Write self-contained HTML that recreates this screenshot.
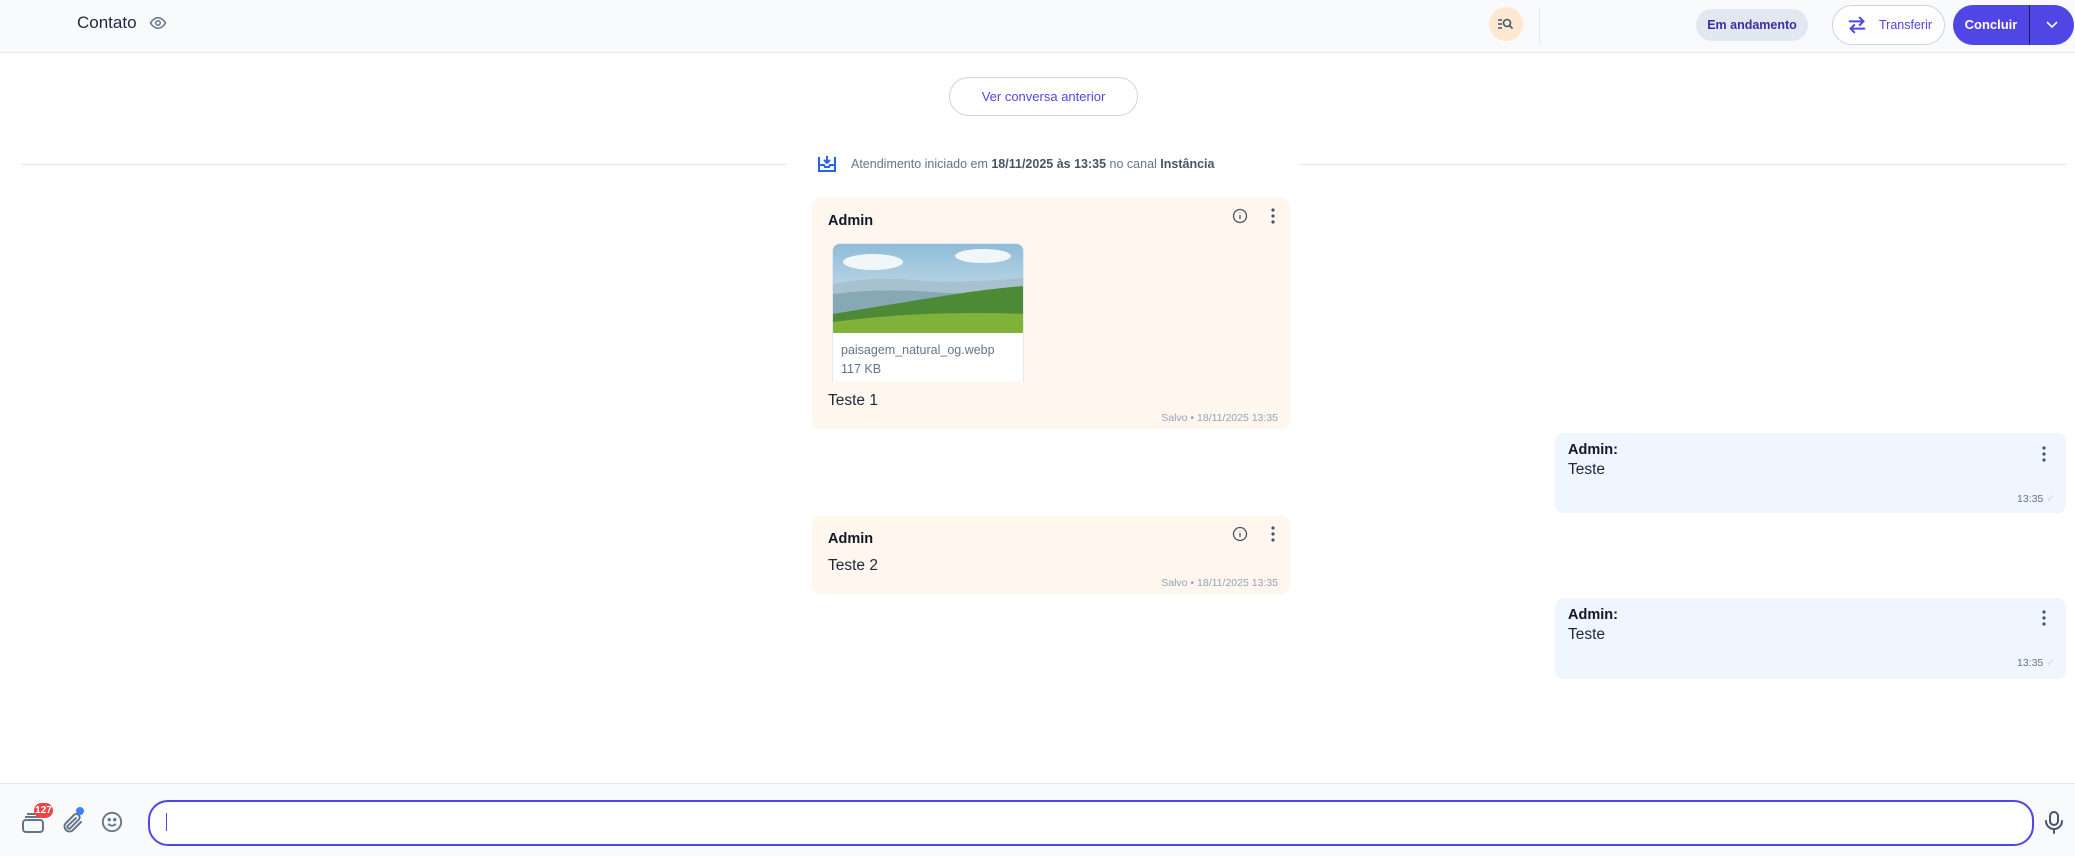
<!DOCTYPE html>
<html><head><meta charset="utf-8"><style>
*{box-sizing:border-box;margin:0;padding:0}
body{width:2075px;height:856px;position:relative;background:#fff;font-family:"Liberation Sans",sans-serif;overflow:hidden;color:#1e293b}
.a{position:absolute}
.hdr{left:0;top:0;width:2075px;height:53px;background:#f8fafc;border-bottom:1px solid #e2e8f0}
.bub{position:absolute;border-radius:8px}
.or{background:#fff6ee}
.bl{background:#eff6ff}
.nm{font-weight:bold;font-size:14.5px;color:#0f172a}
.tx{font-size:15.5px;color:#1e293b}
.ft{font-size:10.5px;color:#94a3b8}
</style></head><body>
<div class="a hdr"></div>
<div class="a" style="left:77px;top:13px;font-size:17px;color:#1e293b">Contato</div>
<svg class="a" style="left:148px;top:14px" width="20" height="18" viewBox="0 0 24 24" fill="none" stroke="#64748b" stroke-width="2"><path d="M2 12s4-7 10-7 10 7 10 7-4 7-10 7S2 12 2 12z"/><circle cx="12" cy="12" r="3"/></svg>
<div class="a" style="left:1489px;top:7px;width:34px;height:34px;border-radius:50%;background:#fde9d2"></div>
<svg class="a" style="left:1497px;top:16px" width="18" height="16" viewBox="0 0 18 16" fill="none" stroke="#475569" stroke-width="1.6"><path d="M1 4h4M1 8h4M1 12h4"/><circle cx="10" cy="7" r="3.5"/><path d="M12.5 9.5l3 3"/></svg>
<div class="a" style="left:1539px;top:8px;width:1px;height:36px;background:#e2e8f0"></div>
<div class="a" style="left:1696px;top:9px;width:112px;height:32px;border-radius:16px;background:#e2e8f0;color:#3730a3;font-size:12.5px;font-weight:bold;text-align:center;line-height:32px">Em andamento</div>
<div class="a" style="left:1832px;top:5px;width:113px;height:40px;border-radius:20px;background:#fff;border:1px solid #cbd5e1;color:#4f46e5;font-size:12.5px;line-height:38px;padding-left:46px">Transferir</div>
<svg class="a" style="left:1846px;top:14px" width="22" height="22" viewBox="0 0 24 24" fill="none" stroke="#4f46e5" stroke-width="2.2" stroke-linecap="round"><path d="M4 8h15M15 4l4 4-4 4M20 16H5M9 12l-4 4 4 4"/></svg>
<div class="a" style="left:1953px;top:5px;width:121px;height:40px;border-radius:20px;background:#4f46e5"></div>
<div class="a" style="left:1953px;top:5px;width:76px;height:40px;color:#fff;font-size:13px;font-weight:bold;text-align:center;line-height:40px">Concluir</div>
<div class="a" style="left:2029px;top:5px;width:1px;height:40px;background:#1e1b4b"></div>
<svg class="a" style="left:2045px;top:19px" width="14" height="12" viewBox="0 0 14 12" fill="none" stroke="#fff" stroke-width="1.6"><path d="M2 3l5 5 5-5"/></svg>

<div class="a" style="left:949px;top:77px;width:189px;height:39px;border-radius:20px;border:1px solid #cbd5e1;color:#4f46e5;font-size:13px;text-align:center;line-height:37px">Ver conversa anterior</div>
<div class="a" style="left:21px;top:164px;width:766px;height:1px;background:#e2e8f0"></div>
<div class="a" style="left:1300px;top:164px;width:767px;height:1px;background:#e2e8f0"></div>
<svg class="a" style="left:817px;top:154px" width="20" height="20" viewBox="0 0 20 20" fill="none" stroke="#2563eb" stroke-width="2"><path d="M2 3v14h16V3"/><path d="M2 11h5l1 2h4l1-2h5M10 2v7M7 6l3 3 3-3"/></svg>
<div class="a" style="left:851px;top:157px;font-size:12.5px;color:#64748b">Atendimento iniciado em <b style="color:#475569">18/11/2025 às 13:35</b> no canal <b style="color:#475569">Instância</b></div>

<div class="bub or" style="left:812px;top:198px;width:478px;height:231px"></div>
<div class="a nm" style="left:828px;top:213px">Admin</div>
<svg class="a" style="left:1232px;top:208px" width="16" height="16" viewBox="0 0 16 16" fill="none" stroke="#475569" stroke-width="1.3"><circle cx="8" cy="8" r="6.5"/><path d="M8 7v4M8 4.8v.4"/></svg>
<svg class="a" style="left:1268px;top:207px" width="10" height="18" viewBox="0 0 10 18" fill="#475569"><circle cx="5" cy="3" r="1.6"/><circle cx="5" cy="9" r="1.6"/><circle cx="5" cy="15" r="1.6"/></svg>
<div class="a" style="left:832px;top:243px;width:192px;height:139px;background:#fff;border-radius:8px 8px 0 0;overflow:hidden;border:1px solid #e2e8f0;border-bottom:none">
<svg width="192" height="89" viewBox="0 0 192 89" style="display:block"><defs><linearGradient id="s" x1="0" y1="0" x2="0" y2="1"><stop offset="0" stop-color="#8fbcd8"/><stop offset="1" stop-color="#e3eef4"/></linearGradient></defs><rect width="192" height="89" fill="url(#s)"/><ellipse cx="40" cy="18" rx="30" ry="8" fill="#f1f6f9"/><ellipse cx="150" cy="12" rx="28" ry="7" fill="#f1f6f9"/><path d="M0 40 Q40 32 80 36 T192 34 V89 H0Z" fill="#a6c2cf"/><path d="M0 50 Q50 44 100 48 T192 46 V89 H0Z" fill="#86a9b4"/><path d="M0 70 Q60 60 110 52 T192 42 V89 H0Z" fill="#4d8a35"/><path d="M0 78 Q90 66 192 70 V89 H0Z" fill="#80b23a"/></svg>
<div style="padding:8px 0 0 8px;font-size:12.5px;color:#64748b;line-height:19px">paisagem_natural_og.webp<br>117 KB</div></div>
<div class="a tx" style="left:828px;top:392px">Teste 1</div>
<div class="a ft" style="right:797px;top:412px">Salvo • 18/11/2025 13:35</div>

<div class="bub bl" style="left:1555px;top:433px;width:511px;height:80px"></div>
<div class="a nm" style="left:1568px;top:442px">Admin:</div>
<div class="a tx" style="left:1568px;top:461px">Teste</div>
<svg class="a" style="left:2039px;top:445px" width="10" height="18" viewBox="0 0 10 18" fill="#475569"><circle cx="5" cy="3" r="1.6"/><circle cx="5" cy="9" r="1.6"/><circle cx="5" cy="15" r="1.6"/></svg>
<div class="a ft" style="left:2017px;top:493px;color:#64748b">13:35 <span style="color:#cbd5e1">✓</span></div>

<div class="bub or" style="left:812px;top:516px;width:478px;height:78px"></div>
<div class="a nm" style="left:828px;top:531px">Admin</div>
<svg class="a" style="left:1232px;top:526px" width="16" height="16" viewBox="0 0 16 16" fill="none" stroke="#475569" stroke-width="1.3"><circle cx="8" cy="8" r="6.5"/><path d="M8 7v4M8 4.8v.4"/></svg>
<svg class="a" style="left:1268px;top:525px" width="10" height="18" viewBox="0 0 10 18" fill="#475569"><circle cx="5" cy="3" r="1.6"/><circle cx="5" cy="9" r="1.6"/><circle cx="5" cy="15" r="1.6"/></svg>
<div class="a tx" style="left:828px;top:557px">Teste 2</div>
<div class="a ft" style="right:797px;top:577px">Salvo • 18/11/2025 13:35</div>

<div class="bub bl" style="left:1555px;top:598px;width:511px;height:81px"></div>
<div class="a nm" style="left:1568px;top:607px">Admin:</div>
<div class="a tx" style="left:1568px;top:626px">Teste</div>
<svg class="a" style="left:2039px;top:609px" width="10" height="18" viewBox="0 0 10 18" fill="#475569"><circle cx="5" cy="3" r="1.6"/><circle cx="5" cy="9" r="1.6"/><circle cx="5" cy="15" r="1.6"/></svg>
<div class="a ft" style="left:2017px;top:657px;color:#64748b">13:35 <span style="color:#cbd5e1">✓</span></div>

<div class="a" style="left:0;top:783px;width:2075px;height:73px;background:#f8fafc;border-top:1px solid #e2e8f0"></div>
<svg class="a" style="left:21px;top:810px" width="24" height="24" viewBox="0 0 24 24" fill="none" stroke="#64748b" stroke-width="2"><rect x="2" y="10" width="20" height="12" rx="3"/><path d="M4 7h16M6 4h12"/></svg>
<div class="a" style="left:34px;top:803px;width:19px;height:15px;border-radius:8px;background:#ef4444;color:#fff;font-size:10px;font-weight:bold;text-align:center;line-height:15px">127</div>
<svg class="a" style="left:61px;top:810px" width="24" height="26" viewBox="0 0 24 24" fill="none" stroke="#64748b" stroke-width="2" stroke-linecap="round"><path d="M20 11l-8.5 8.5a5 5 0 01-7-7L13 4a3.3 3.3 0 014.7 4.7l-8.5 8.5a1.7 1.7 0 01-2.4-2.4L15 7"/></svg>
<div class="a" style="left:76px;top:807px;width:8px;height:8px;border-radius:50%;background:#3b82f6"></div>
<svg class="a" style="left:101px;top:811px" width="22" height="22" viewBox="0 0 24 24" fill="none" stroke="#64748b" stroke-width="2"><circle cx="12" cy="12" r="10"/><path d="M8 14s1.5 2 4 2 4-2 4-2"/><circle cx="9" cy="9.5" r=".8" fill="#64748b"/><circle cx="15" cy="9.5" r=".8" fill="#64748b"/></svg>
<div class="a" style="left:148px;top:800px;width:1886px;height:46px;border-radius:20px;border:2px solid #4f46e5;background:#fff"></div>
<div class="a" style="left:166px;top:813px;width:1px;height:18px;background:#4f46e5"></div>
<svg class="a" style="left:2044px;top:810px" width="20" height="24" viewBox="0 0 20 24" fill="none" stroke="#475569" stroke-width="2" stroke-linecap="round"><rect x="6" y="2" width="8" height="13" rx="4"/><path d="M2 11a8 8 0 0016 0M10 19v4"/></svg>
</body></html>
